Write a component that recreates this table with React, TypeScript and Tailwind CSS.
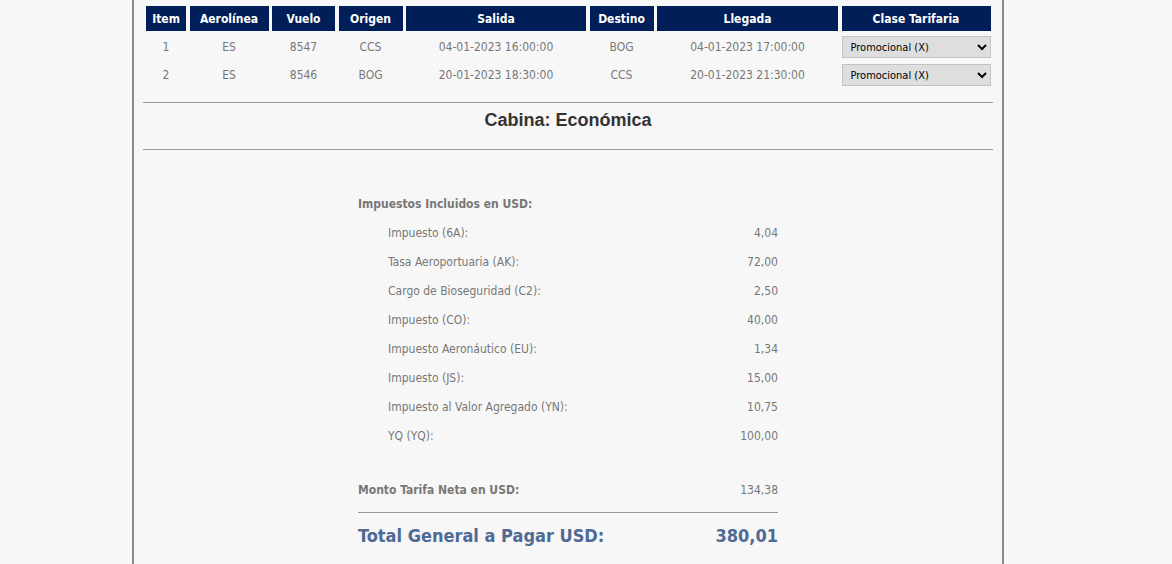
const flights = [
  { item: '1', airline: 'ES', flight: '8547', from: 'CCS', dep: '04-01-2023 16:00:00', to: 'BOG', arr: '04-01-2023 17:00:00' },
  { item: '2', airline: 'ES', flight: '8546', from: 'BOG', dep: '20-01-2023 18:30:00', to: 'CCS', arr: '20-01-2023 21:30:00' },
]

const taxes = [
  ['Impuesto (6A):', '4,04'],
  ['Tasa Aeroportuaria (AK):', '72,00'],
  ['Cargo de Bioseguridad (C2):', '2,50'],
  ['Impuesto (CO):', '40,00'],
  ['Impuesto Aeronáutico (EU):', '1,34'],
  ['Impuesto (JS):', '15,00'],
  ['Impuesto al Valor Agregado (YN):', '10,75'],
  ['YQ (YQ):', '100,00'],
]

const headers = ['Item', 'Aerolínea', 'Vuelo', 'Origen', 'Salida', 'Destino', 'Llegada', 'Clase Tarifaria']

const grid = 'grid grid-cols-[40px_79px_63px_64px_180px_64px_181px_149px] gap-x-[3.5px]'

const App = () => {
  return (
    <div className="min-h-screen bg-[#f7f7f7] font-['DejaVu_Sans_Condensed','DejaVu_Sans',sans-serif] text-[12px] text-[#777]">
      <div className="ml-[132px] w-[872px] h-[564px] border-x-2 border-[#8a8a8a] pt-[6px] overflow-hidden">
        <div className="pl-[12px]">
          <div className={grid}>
            {headers.map((h) => (
              <div key={h} className="h-[25px] flex items-center justify-center bg-[#001e57] text-white font-bold">
                {h}
              </div>
            ))}
          </div>
          <div className="pt-[2px]">
            {flights.map((f) => (
              <div key={f.item} className={grid + ' h-[28px] items-center text-center'}>
                <span>{f.item}</span>
                <span>{f.airline}</span>
                <span>{f.flight}</span>
                <span>{f.from}</span>
                <span>{f.dep}</span>
                <span>{f.to}</span>
                <span>{f.arr}</span>
                <select className="h-[22px] w-[149px] bg-[#dedede] border border-[#c2c2c2] text-[11px] text-black pl-[4px]">
                  <option>Promocional (X)</option>
                </select>
              </div>
            ))}
          </div>
        </div>

        <div className="mx-[9px] mt-[13px] border-t border-[#9a9a9a]" />
        <h2 className="h-[46px] pt-[5px] text-center leading-[24px] font-['Liberation_Sans',sans-serif] font-bold text-[18px] text-[#333]">
          Cabina: Económica
        </h2>
        <div className="mx-[9px] border-t border-[#9a9a9a]" />

        <div className="ml-[224px] w-[420px] pt-[46px]">
          <div className="font-bold h-[16px] leading-[16px]">Impuestos Incluidos en USD:</div>
          <div className="mt-[13px] flex flex-col gap-[13px]">
            {taxes.map(([label, value]) => (
              <div key={label} className="flex justify-between h-[16px] leading-[16px] pl-[30px]">
                <span>{label}</span>
                <span>{value}</span>
              </div>
            ))}
          </div>
          <div className="mt-[38px] flex justify-between h-[16px] leading-[16px]">
            <span className="font-bold">Monto Tarifa Neta en USD:</span>
            <span>134,38</span>
          </div>
          <div className="mt-[14px] border-t border-[#9a9a9a]" />
          <div className="mt-[11px] flex justify-between text-[18px] font-bold text-[#4f6a94] leading-[24px]">
            <span>Total General a Pagar USD:</span>
            <span>380,01</span>
          </div>
        </div>
      </div>
    </div>
  )
}

export default App
